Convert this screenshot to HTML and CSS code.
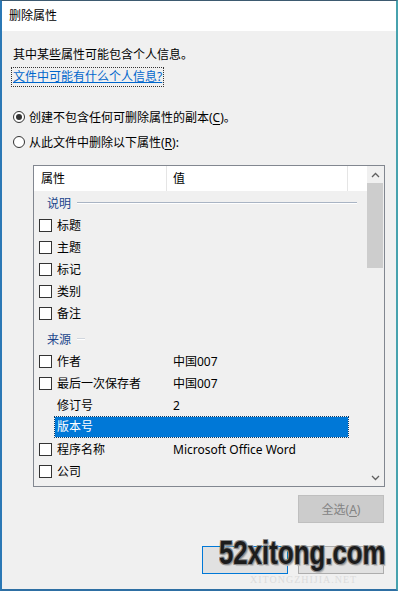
FILE: index.html
```html
<!DOCTYPE html>
<html lang="zh-CN">

<head>
    <meta charset="UTF-8">
    <title>删除属性</title>
    <link rel="stylesheet" href="styles.css">
</head>

<body>
    <div class="window">
        <div class="title-bar">删除属性</div>

        <div class="content">
            <p class="info">其中某些属性可能包含个人信息。</p>
            <p class="link-line"><a class="info-link" href="#">文件中可能有什么个人信息?</a></p>

            <label class="radio first">
                <span class="radio-dot checked"></span>
                <span>创建不包含任何可删除属性的副本(<u>C</u>)。</span>
            </label>
            <label class="radio">
                <span class="radio-dot"></span>
                <span>从此文件中删除以下属性(<u>R</u>):</span>
            </label>

            <div class="panel">
                <div class="listbox">
                    <div class="list-main">
                        <div class="list-header">
                            <div class="col-name">属性</div>
                            <div class="col-value">值</div>
                        </div>

                        <div class="group"><span>说明</span><i class="group-line"></i></div>
                        <div class="row"><div class="name"><span class="check"></span>标题</div></div>
                        <div class="row"><div class="name"><span class="check"></span>主题</div></div>
                        <div class="row"><div class="name"><span class="check"></span>标记</div></div>
                        <div class="row"><div class="name"><span class="check"></span>类别</div></div>
                        <div class="row"><div class="name"><span class="check"></span>备注</div></div>

                        <div class="group second"><span>来源</span><i class="group-line short"></i></div>
                        <div class="row"><div class="name"><span class="check"></span>作者</div><div class="value">中国007</div></div>
                        <div class="row"><div class="name"><span class="check"></span>最后一次保存者</div><div class="value">中国007</div></div>
                        <div class="row"><div class="name plain">修订号</div><div class="value">2</div></div>
                        <div class="row"><div class="selected">版本号</div></div>
                        <div class="row"><div class="name"><span class="check"></span>程序名称</div><div class="value">Microsoft Office Word</div></div>
                        <div class="row"><div class="name"><span class="check"></span>公司</div></div>
                    </div>

                    <div class="scrollbar">
                        <div class="arrow">
                            <svg width="9" height="6" viewBox="0 0 9 6"><path d="M1 5 L4.5 1.5 L8 5" fill="none" stroke="#606060" stroke-width="1.3"/></svg>
                        </div>
                        <div class="thumb"></div>
                        <div class="track"></div>
                        <div class="arrow">
                            <svg width="9" height="6" viewBox="0 0 9 6"><path d="M1 1 L4.5 4.5 L8 1" fill="none" stroke="#606060" stroke-width="1.3"/></svg>
                        </div>
                    </div>
                </div>

                <div class="btn-row">
                    <button class="btn disabled">全选(<u>A</u>)</button>
                </div>
                <!-- labels are hidden under the watermark in the screenshot -->
                <div class="btn-row bottom">
                    <button class="btn default" aria-label="确定"></button>
                    <button class="btn" aria-label="取消"></button>
                </div>
            </div>
        </div>

        <div class="watermark">52xitong.com</div>
        <div class="watermark-sub">XITONGZHIJIA.NET</div>
    </div>
</body>

</html>
```

FILE: styles.css
```css
* {
    box-sizing: border-box;
    margin: 0;
    padding: 0;
}

body {
    font-family: "Noto Sans", "Noto Sans CJK SC", sans-serif;
    font-size: 12px;
    color: #000;
    background-color: #f0f0f0;
}

.window {
    position: relative;
    width: 398px;
    height: 591px;
    background-color: #f0f0f0;
    border-top: 1px solid #3d5a70;
    border-left: 2px solid #2b78b5;
    border-right: 2px solid #47a2ae;
    border-bottom: 2px solid #2e6fa3;
    overflow: hidden;
}

.title-bar {
    height: 30px;
    line-height: 30px;
    padding-left: 7px;
    background-color: #fff;
}

.content {
    padding: 14px 0 0 11px;
}

.info {
    line-height: 20px;
}

.link-line {
    margin-top: 2px;
    line-height: 20px;
}

.info-link {
    display: inline-block;
    color: #0066cc;
    line-height: 18px;
    outline: 1px dotted #333;
    outline-offset: 0;
    padding: 0 1px;
    margin-left: -1px;
}

.radio {
    display: flex;
    align-items: center;
    gap: 4px;
    height: 20px;
    margin-top: 5px;
}

.radio.first {
    margin-top: 20px;
}

.radio u,
.btn u {
    text-underline-offset: 2px;
}

.radio-dot {
    position: relative;
    width: 12px;
    height: 12px;
    border: 1px solid #333;
    border-radius: 50%;
    background-color: #fff;
}

.radio-dot.checked::after {
    content: "";
    position: absolute;
    left: 2px;
    top: 2px;
    width: 6px;
    height: 6px;
    border-radius: 50%;
    background-color: #333;
}

.panel {
    width: 352px;
    margin: 13px 0 0 20px;
}

.listbox {
    display: flex;
    height: 322px;
    border: 1px solid #828790;
    background-color: #f0f0f0;
}

.list-main {
    flex: 1;
}

.list-header {
    display: flex;
    height: 25px;
    line-height: 25px;
    background-color: #fff;
}

.col-name {
    width: 133px;
    padding-left: 7px;
    border-right: 1px solid #e5e5e5;
}

.col-value {
    width: 181px;
    padding-left: 6px;
    border-right: 1px solid #e5e5e5;
}

.group {
    display: flex;
    align-items: center;
    height: 23px;
    padding-left: 13px;
    color: #21468c;
}

.group.second {
    margin-top: 3px;
}

.group-line {
    width: 280px;
    margin-left: 6px;
    border-top: 1px solid #a9b4c4;
    box-shadow: 0 1px 0 #fff;
}

.group-line.short {
    width: 8px;
    border-top-color: #d0d6de;
}

.row {
    display: flex;
    align-items: center;
    height: 22px;
}

.name {
    display: flex;
    align-items: center;
    width: 139px;
    padding-left: 5px;
}

.name.plain {
    padding-left: 23px;
}

.check {
    width: 13px;
    height: 13px;
    margin-right: 5px;
    border: 1px solid #333;
    background-color: #fff;
}

.selected {
    width: 293px;
    height: 20px;
    line-height: 20px;
    margin-left: 21px;
    padding-left: 2px;
    color: #fff;
    background-color: #0078d7;
    outline: 1px dotted #0a3d6b;
}

.scrollbar {
    display: flex;
    flex-direction: column;
    width: 17px;
    background-color: #f0f0f0;
}

.arrow {
    display: flex;
    align-items: center;
    justify-content: center;
    height: 17px;
}

.thumb {
    height: 85px;
    margin: 0 1px 0 0;
    background-color: #cdcdcd;
}

.track {
    flex: 1;
}

.btn-row {
    display: flex;
    justify-content: flex-end;
    gap: 10px;
    margin-top: 8px;
    padding-right: 1px;
}

.btn-row.bottom {
    margin-top: 23px;
}

.btn {
    width: 86px;
    height: 28px;
    font-family: inherit;
    font-size: 12px;
    color: #000;
    background-color: #e1e1e1;
    border: 1px solid #adadad;
}

.btn.default {
    border-color: #0078d7;
}

.btn.disabled {
    color: #838383;
    background-color: #cccccc;
    border-color: #bfbfbf;
}

.watermark {
    position: absolute;
    left: 217px;
    top: 532px;
    font-family: "Liberation Sans", sans-serif;
    font-size: 34px;
    font-weight: bold;
    color: #1c1c1c;
    transform: scaleX(0.76);
    transform-origin: left top;
    text-shadow: 1px 1px 0 #8a8a8a, -1px -1px 0 #8a8a8a, 1px -1px 0 #8a8a8a, -1px 1px 0 #8a8a8a, 2px 2px 1px #bbb;
}

.watermark-sub {
    position: absolute;
    left: 248px;
    top: 573px;
    font-family: "Liberation Serif", serif;
    font-size: 10px;
    letter-spacing: 1px;
    color: #dcdcdc;
}
```
